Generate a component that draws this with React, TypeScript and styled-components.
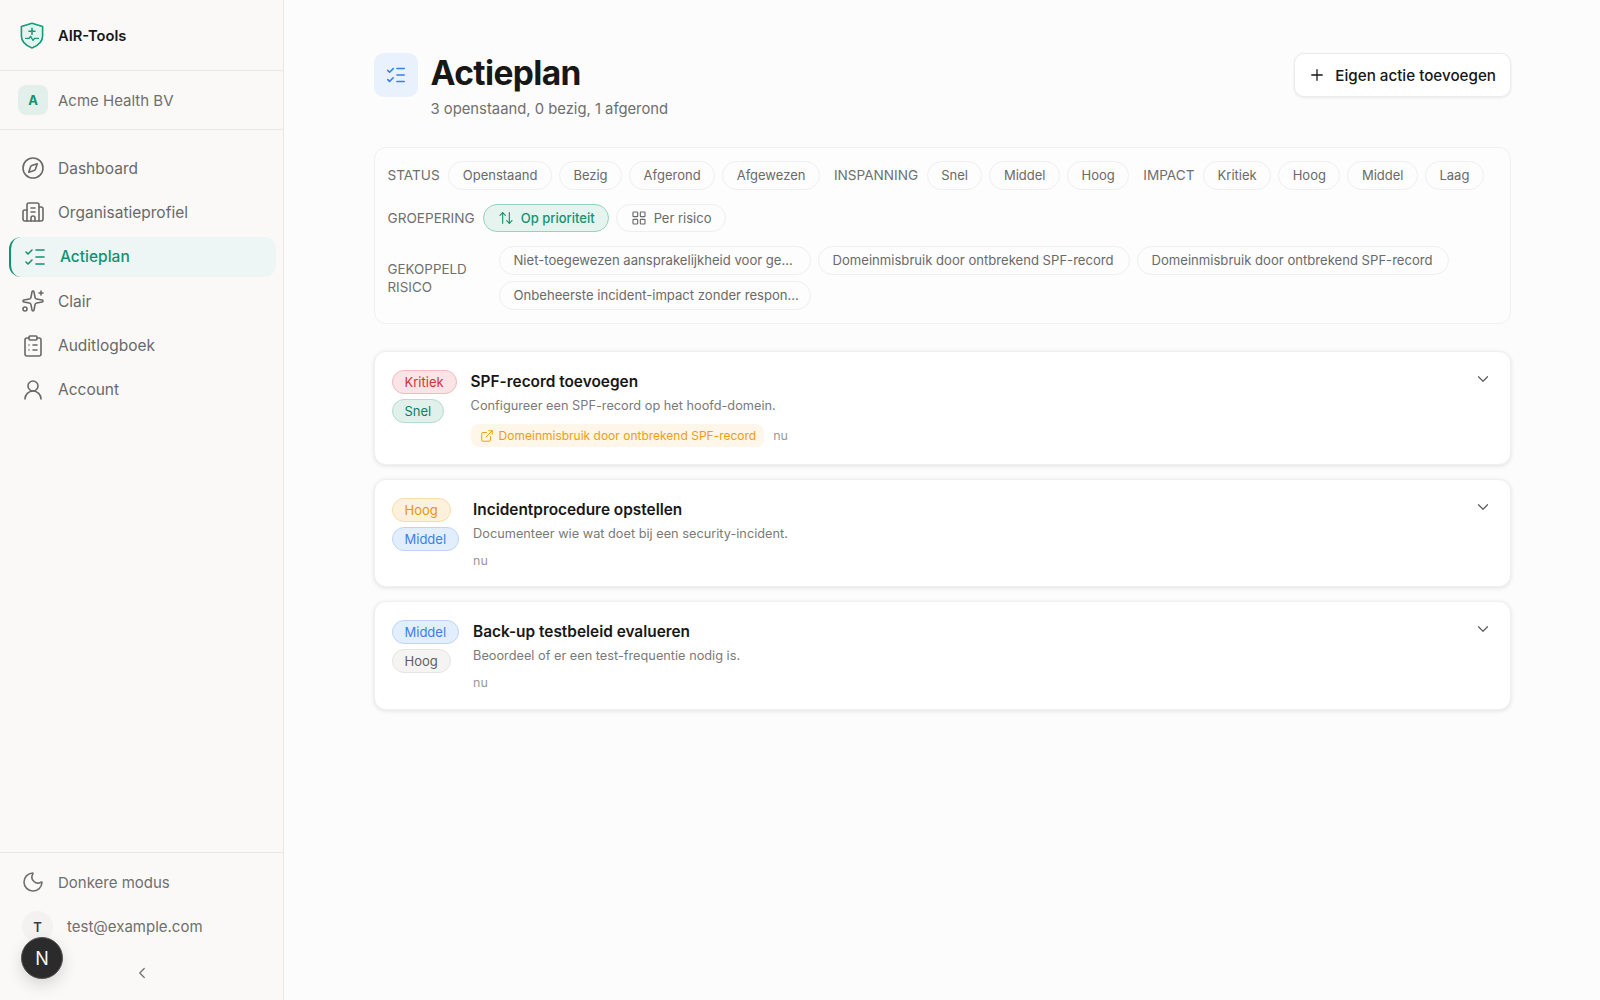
import React from "react";
import styled, { createGlobalStyle } from "styled-components";
import {
  ArrowUpDown,
  Building2,
  ChevronDown,
  ChevronLeft,
  ClipboardList,
  Compass,
  ExternalLink,
  LayoutGrid,
  ListChecks,
  Moon,
  Plus,
  Sparkles,
  UserRound,
} from "lucide-react";

const GlobalStyle = createGlobalStyle`
  * { box-sizing: border-box; }
  html, body { margin: 0; height: 100%; }
  body {
    font-family: Inter, "Noto Sans", "Liberation Sans", sans-serif;
    background: #fcfcfc;
    color: #171717;
  }
`;

type Tone = "red" | "green" | "amber" | "blue" | "gray";

const tones: Record<Tone, { bg: string; border: string; text: string }> = {
  red: { bg: "#fbe4e6", border: "#f3b9be", text: "#d4303c" },
  green: { bg: "#e0f0ea", border: "#b5dccd", text: "#12805f" },
  amber: { bg: "#fdf1dc", border: "#f9dcaa", text: "#e8950c" },
  blue: { bg: "#e3eefd", border: "#bdd5f8", text: "#3b7fe6" },
  gray: { bg: "#f5f4f3", border: "#e6e5e3", text: "#5f5f5f" },
};

const navItems = [
  { label: "Dashboard", icon: Compass },
  { label: "Organisatieprofiel", icon: Building2 },
  { label: "Actieplan", icon: ListChecks, active: true },
  { label: "Clair", icon: Sparkles },
  { label: "Auditlogboek", icon: ClipboardList },
  { label: "Account", icon: UserRound },
];

const filterGroups = [
  { label: "STATUS", options: ["Openstaand", "Bezig", "Afgerond", "Afgewezen"] },
  { label: "INSPANNING", options: ["Snel", "Middel", "Hoog"] },
  { label: "IMPACT", options: ["Kritiek", "Hoog", "Middel", "Laag"] },
];

const risks = [
  "Niet-toegewezen aansprakelijkheid voor ge…",
  "Domeinmisbruik door ontbrekend SPF-record",
  "Domeinmisbruik door ontbrekend SPF-record",
  "Onbeheerste incident-impact zonder respon…",
];

const actions: {
  title: string;
  description: string;
  impact: [string, Tone];
  effort: [string, Tone];
  risk?: string;
}[] = [
  {
    title: "SPF-record toevoegen",
    description: "Configureer een SPF-record op het hoofd-domein.",
    impact: ["Kritiek", "red"],
    effort: ["Snel", "green"],
    risk: "Domeinmisbruik door ontbrekend SPF-record",
  },
  {
    title: "Incidentprocedure opstellen",
    description: "Documenteer wie wat doet bij een security-incident.",
    impact: ["Hoog", "amber"],
    effort: ["Middel", "blue"],
  },
  {
    title: "Back-up testbeleid evalueren",
    description: "Beoordeel of er een test-frequentie nodig is.",
    impact: ["Middel", "blue"],
    effort: ["Hoog", "gray"],
  },
];

const LogoMark = () => (
  <svg width="24" height="27" viewBox="0 0 24 27" fill="none">
    <path
      d="M12 1.2 22.6 4.6v9.2c0 5.9-4.3 9.9-10.6 12.2C5.7 23.7 1.4 19.7 1.4 13.8V4.6L12 1.2Z"
      fill="#e6f4f0"
      stroke="#159a7b"
      strokeWidth="1.6"
      strokeLinejoin="round"
    />
    <path
      d="M12 6.2v6M9 9.2h6"
      stroke="#159a7b"
      strokeWidth="1.6"
      strokeLinecap="round"
    />
    <path
      d="M5.6 16.4h3.6l1.4-2.2 2.4 4.2 1.5-2h3.9"
      stroke="#159a7b"
      strokeWidth="1.3"
      strokeLinecap="round"
      strokeLinejoin="round"
    />
  </svg>
);

const App = () => {
  return (
    <Page>
      <GlobalStyle />
      <Sidebar>
        <Brand>
          <LogoMark />
          <BrandName>AIR-Tools</BrandName>
        </Brand>
        <Company>
          <CompanyAvatar>A</CompanyAvatar>
          <CompanyName>Acme Health BV</CompanyName>
        </Company>
        <Nav>
          {navItems.map(({ label, icon: Icon, active }) => (
            <NavItem key={label} $active={active}>
              <Icon size={24} strokeWidth={1.6} />
              {label}
            </NavItem>
          ))}
        </Nav>
        <SidebarFooter>
          <ThemeRow>
            <Moon size={24} strokeWidth={1.6} />
            Donkere modus
          </ThemeRow>
          <UserRow>
            <UserAvatar>T</UserAvatar>
            test@example.com
          </UserRow>
          <CollapseRow>
            <ChevronLeft size={18} strokeWidth={1.6} />
          </CollapseRow>
          <DevBadge>N</DevBadge>
        </SidebarFooter>
      </Sidebar>

      <Main>
        <Header>
          <HeaderIcon>
            <ListChecks size={22} strokeWidth={1.7} />
          </HeaderIcon>
          <HeaderText>
            <Title>Actieplan</Title>
            <Subtitle>3 openstaand, 0 bezig, 1 afgerond</Subtitle>
          </HeaderText>
          <AddButton>
            <Plus size={18} strokeWidth={1.7} />
            Eigen actie toevoegen
          </AddButton>
        </Header>

        <FilterPanel>
          <FilterRow>
            {filterGroups.map((group) => (
              <FilterGroup key={group.label}>
                <FilterLabel>{group.label}</FilterLabel>
                {group.options.map((option) => (
                  <Pill key={option}>{option}</Pill>
                ))}
              </FilterGroup>
            ))}
          </FilterRow>
          <FilterRow>
            <FilterGroup>
              <FilterLabel>GROEPERING</FilterLabel>
              <Pill $active>
                <ArrowUpDown size={16} strokeWidth={1.7} />
                Op prioriteit
              </Pill>
              <Pill>
                <LayoutGrid size={16} strokeWidth={1.7} />
                Per risico
              </Pill>
            </FilterGroup>
          </FilterRow>
          <RiskRow>
            <RiskLabel>GEKOPPELD RISICO</RiskLabel>
            <RiskList>
              {risks.map((risk, index) => (
                <RiskPill key={index}>{risk}</RiskPill>
              ))}
            </RiskList>
          </RiskRow>
        </FilterPanel>

        <CardList>
          {actions.map((action) => (
            <Card key={action.title}>
              <BadgeColumn>
                <Badge $tone={action.impact[1]}>{action.impact[0]}</Badge>
                <Badge $tone={action.effort[1]}>{action.effort[0]}</Badge>
              </BadgeColumn>
              <CardBody>
                <CardTitle>{action.title}</CardTitle>
                <CardDescription>{action.description}</CardDescription>
                <CardMeta>
                  {action.risk && (
                    <RiskTag>
                      <ExternalLink size={14} strokeWidth={1.7} />
                      {action.risk}
                    </RiskTag>
                  )}
                  <Timestamp>nu</Timestamp>
                </CardMeta>
              </CardBody>
              <CardToggle>
                <ChevronDown size={18} strokeWidth={1.6} />
              </CardToggle>
            </Card>
          ))}
        </CardList>
      </Main>
    </Page>
  );
};

const Page = styled.div`
  display: flex;
  height: 1000px;
  overflow: hidden;
`;

const Sidebar = styled.aside`
  display: flex;
  flex-direction: column;
  flex: 0 0 284px;
  height: 100%;
  background: #faf9f7;
  border-right: 1px solid #e9e8e6;
`;

const Brand = styled.div`
  display: flex;
  align-items: center;
  gap: 14px;
  height: 71px;
  padding: 0 20px;
  border-bottom: 1px solid #e9e8e6;
`;

const BrandName = styled.span`
  margin-top: 1px;
  font-size: 14.7px;
  font-weight: 600;
  color: #171717;
`;

const Company = styled.div`
  display: flex;
  align-items: center;
  gap: 10px;
  height: 59px;
  padding: 0 18px;
  border-bottom: 1px solid #e9e8e6;
`;

const CompanyAvatar = styled.div`
  display: flex;
  align-items: center;
  justify-content: center;
  width: 30px;
  height: 30px;
  border-radius: 8px;
  background: #e2efeb;
  color: #12926f;
  font-size: 13px;
  font-weight: 700;
`;

const CompanyName = styled.span`
  font-size: 15px;
  color: #6f6f6f;
`;

const Nav = styled.nav`
  display: flex;
  flex-direction: column;
  gap: 4.4px;
  padding: 18px 7px 0 9px;
`;

const NavItem = styled.a<{ $active?: boolean }>`
  display: flex;
  align-items: center;
  gap: 13px;
  height: 40px;
  padding-left: 12px;
  border-radius: 12px;
  border-left: ${({ $active }) => ($active ? "2px solid #12926f" : "none")};
  background: ${({ $active }) => ($active ? "#eef6f5" : "transparent")};
  color: ${({ $active }) => ($active ? "#12926f" : "#696969")};
  font-size: 15.5px;
  font-weight: ${({ $active }) => ($active ? 500 : 400)};
`;

const SidebarFooter = styled.div`
  position: relative;
  display: flex;
  flex-direction: column;
  margin-top: auto;
  height: 148px;
  border-top: 1px solid #e9e8e6;
`;

const ThemeRow = styled.div`
  display: flex;
  align-items: center;
  gap: 13px;
  height: 44px;
  margin-top: 7px;
  padding-left: 21px;
  color: #6f6f6f;
  font-size: 15px;
`;

const UserRow = styled.div`
  display: flex;
  align-items: center;
  gap: 14px;
  margin-top: 7px;
  padding-left: 22px;
  color: #6f6f6f;
  font-size: 15px;
`;

const UserAvatar = styled.div`
  display: flex;
  align-items: center;
  justify-content: center;
  width: 31px;
  height: 31px;
  border-radius: 50%;
  background: #f3f2f0;
  color: #3c3c3c;
  font-size: 13px;
  font-weight: 600;
`;

const CollapseRow = styled.div`
  display: flex;
  justify-content: center;
  margin-top: 22px;
  color: #6f6f6f;
`;

const DevBadge = styled.div`
  position: absolute;
  left: 21px;
  top: 84px;
  display: flex;
  align-items: center;
  justify-content: center;
  width: 42px;
  height: 42px;
  border-radius: 50%;
  background: #2b2b2b;
  border: 1px solid #555;
  box-shadow: 0 6px 16px rgba(0, 0, 0, 0.14);
  color: #f5f5f5;
  font-size: 18px;
  font-weight: 400;
`;

const Main = styled.main`
  flex: 1;
  min-width: 0;
  padding: 53px 89px 0 89.5px;
  background: #fcfcfc;
`;

const Header = styled.header`
  display: flex;
  align-items: flex-start;
  gap: 13px;
  margin-bottom: 27px;
`;

const HeaderIcon = styled.div`
  display: flex;
  align-items: center;
  justify-content: center;
  width: 44px;
  height: 44px;
  border-radius: 10px;
  background: #e9f1fc;
  color: #3b7fe6;
`;

const HeaderText = styled.div`
  display: flex;
  flex-direction: column;
  flex: 1;
`;

const Title = styled.h1`
  margin: 0;
  font-size: 33.5px;
  line-height: 40px;
  font-weight: 700;
  letter-spacing: -0.6px;
  color: #171717;
`;

const Subtitle = styled.p`
  margin: 5px 0 0;
  font-size: 14.8px;
  line-height: 22px;
  color: #6f6f6f;
`;

const AddButton = styled.button`
  display: flex;
  align-items: center;
  gap: 9px;
  height: 44px;
  padding: 0 14px 0 13px;
  border: 1px solid #ebebeb;
  border-radius: 10px;
  background: #fff;
  box-shadow: 0 1px 3px rgba(0, 0, 0, 0.08);
  color: #171717;
  font-family: inherit;
  font-size: 15.2px;
  font-weight: 500;
`;

const FilterPanel = styled.section`
  display: flex;
  flex-direction: column;
  gap: 14px;
  padding: 13px;
  border: 1px solid #f1f0ef;
  border-radius: 12px;
  background: #fdfdfd;
  margin-bottom: 27.5px;
`;

const FilterRow = styled.div`
  display: flex;
  gap: 14px;
`;

const FilterGroup = styled.div`
  display: flex;
  align-items: center;
  gap: 7px;
`;

const FilterLabel = styled.span`
  margin-right: 1.6px;
  font-size: 13.6px;
  color: #6f6f6f;
`;

const Pill = styled.button<{ $active?: boolean }>`
  display: flex;
  align-items: center;
  gap: 7px;
  height: 28.5px;
  padding: 0 13.5px;
  border: 1px solid ${({ $active }) => ($active ? "#93d3c0" : "#f0efee")};
  border-radius: 999px;
  background: ${({ $active }) => ($active ? "#e6f4f0" : "#fdfdfd")};
  color: ${({ $active }) => ($active ? "#12926f" : "#6a6a6a")};
  font-family: inherit;
  font-size: 13px;
  font-weight: ${({ $active }) => ($active ? 500 : 400)};
  white-space: nowrap;
`;

const RiskPill = styled(Pill)`
  width: 312px;
  padding: 0 14px;
  font-size: 13.1px;
`;

const RiskRow = styled.div`
  display: flex;
  align-items: center;
  gap: 9px;
`;

const RiskLabel = styled.span`
  flex: 0 0 102px;
  font-size: 13.4px;
  line-height: 18px;
  color: #6f6f6f;
`;

const RiskList = styled.div`
  display: flex;
  flex-wrap: wrap;
  gap: 6.5px 7px;
`;

const CardList = styled.div`
  display: flex;
  flex-direction: column;
  gap: 14px;
`;

const Card = styled.article`
  display: flex;
  align-items: flex-start;
  gap: 14px;
  padding: 18px 18px 16.5px 17px;
  border: 1px solid #f0f0ef;
  border-radius: 12px;
  background: #fff;
  box-shadow: 0 1px 4px rgba(0, 0, 0, 0.11);
`;

const BadgeColumn = styled.div`
  display: flex;
  flex-direction: column;
  align-items: flex-start;
  gap: 5px;
`;

const Badge = styled.span<{ $tone: Tone }>`
  display: inline-flex;
  align-items: center;
  height: 24px;
  padding: 0 12px;
  border: 1px solid ${({ $tone }) => tones[$tone].border};
  border-radius: 999px;
  background: ${({ $tone }) => tones[$tone].bg};
  color: ${({ $tone }) => tones[$tone].text};
  font-size: 13px;
  font-weight: 400;
`;

const CardBody = styled.div`
  display: flex;
  flex: 1;
  flex-direction: column;
  min-width: 0;
`;

const CardTitle = styled.h3`
  margin: 0;
  font-size: 15.4px;
  line-height: 24px;
  font-weight: 600;
  color: #171717;
`;

const CardDescription = styled.p`
  margin: 2px 0 0;
  font-size: 12.75px;
  line-height: 20px;
  color: #7a7a7a;
`;

const CardMeta = styled.div`
  display: flex;
  align-items: center;
  gap: 9px;
  margin-top: 8px;
`;

const RiskTag = styled.span`
  display: inline-flex;
  align-items: center;
  gap: 5px;
  height: 23px;
  padding: 0 8px 0 9px;
  border-radius: 8px;
  background: #fef6e8;
  color: #f09d12;
  font-size: 12px;
  font-weight: 400;
`;

const Timestamp = styled.span`
  font-size: 12.5px;
  line-height: 18px;
  color: #9a9a9a;
`;

const CardToggle = styled.div`
  display: flex;
  color: #5f5f5f;
`;

export default App;
